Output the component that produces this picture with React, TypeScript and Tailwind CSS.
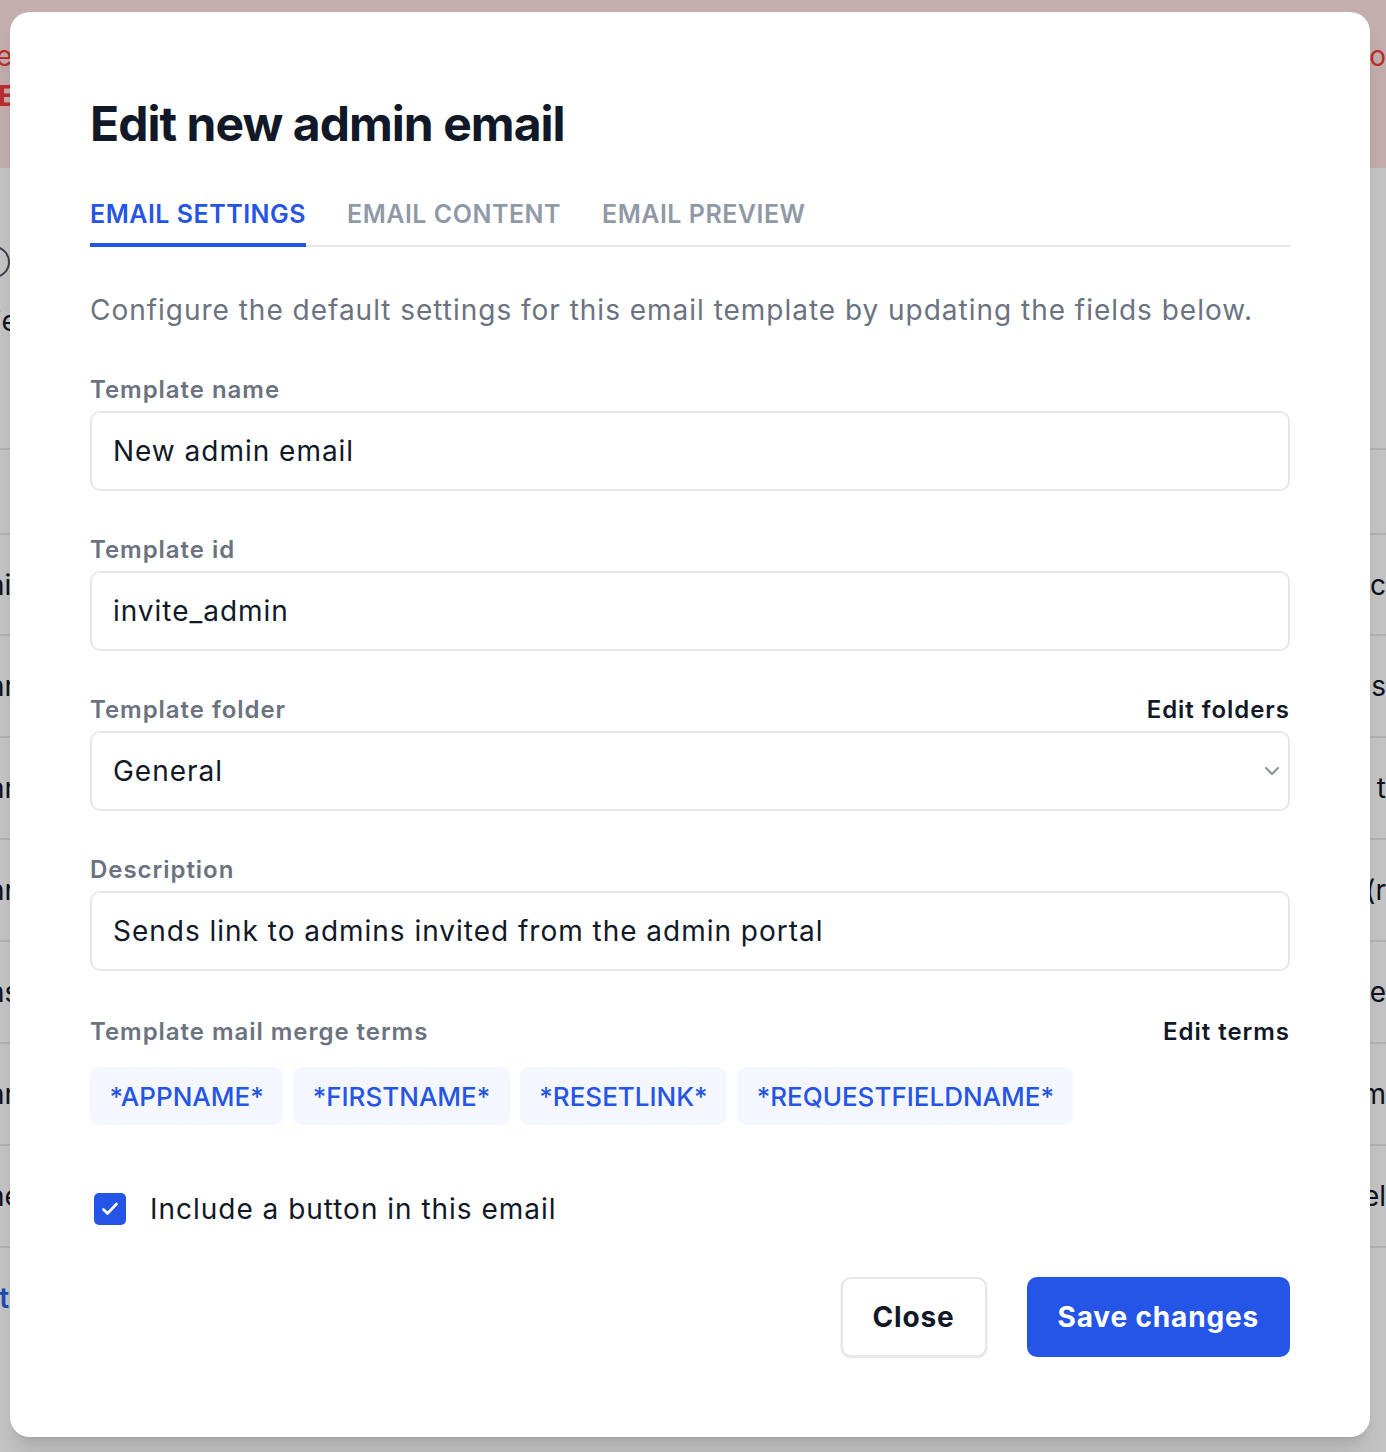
import React from "react";

function Field({ label, right, children }: { label: string; right?: string; children: React.ReactNode }) {
  return (
    <div className="flex flex-col">
      <div className="flex items-center justify-between">
        <span className="text-[24px] font-semibold leading-[32px] tracking-[0.04em] text-[#6b7280]">{label}</span>
        {right && (
          <span className="text-[24px] font-semibold leading-[32px] tracking-[0.04em] text-[#111827]">{right}</span>
        )}
      </div>
      <div className="mt-[5px]">{children}</div>
    </div>
  );
}

function TextBox({ value }: { value: string }) {
  return (
    <input
      readOnly
      defaultValue={value}
      className="h-[80px] w-full rounded-[10px] border-2 border-[#e5e7eb] bg-white px-[21px] text-[28px] tracking-[0.035em] text-[#111827] outline-none"
    />
  );
}

const chips = ["*APPNAME*", "*FIRSTNAME*", "*RESETLINK*", "*REQUESTFIELDNAME*"];

const rows: { h: string; left: string; right: string }[] = [
  { h: "h-[85px]", left: "", right: "" },
  { h: "h-[101px]", left: "ni", right: "c" },
  { h: "h-[102px]", left: "nm", right: "s" },
  { h: "h-[102px]", left: "nm", right: "ı t" },
  { h: "h-[102px]", left: "nr", right: "(r" },
  { h: "h-[102px]", left: "ns", right: "re" },
  { h: "h-[102px]", left: "nm", right: "m" },
  { h: "h-[102px]", left: "ne", right: "el" },
];

export default function App() {
  return (
    <div className="relative h-[1452px] w-[1386px] overflow-hidden bg-white font-['Inter','Noto_Sans',sans-serif]">
      {/* background page */}
      <div className="flex flex-col">
        <div className="flex h-[168px] flex-col bg-[#fee2e2] pt-[36px]">
          <div className="flex h-[40px] items-center text-[28px] text-[#f53b3b]">
            <span className="-ml-[4px] w-[1376px]">e</span>
            <span>o</span>
          </div>
          <div className="flex h-[40px] items-center text-[28px] font-bold text-[#f53b3b]">
            <span className="-ml-[2px]">E</span>
          </div>
        </div>
        <div className="flex h-[282px] flex-col border-b-2 border-[#e5e7eb]">
          <div className="mt-[78px] -ml-[22px] h-[32px] w-[32px] rounded-full border-2 border-[#4b5563]"></div>
          <div className="mt-[22px] -ml-[12px] text-[28px] text-[#111827]">lie</div>
        </div>
        {rows.map((r, i) => (
          <div key={i} className={`flex ${r.h} items-center border-b-2 border-[#e5e7eb] text-[28px] text-[#111827]`}>
            <div className="w-[1372px] overflow-hidden">
              <span className="-ml-[12px] block">{r.left}</span>
            </div>
            <span className="whitespace-nowrap">{r.right}</span>
          </div>
        ))}
        <div className="flex h-[100px] items-center text-[28px] font-semibold text-[#2563eb]">
          <span className="-ml-[8px]">ite</span>
        </div>
      </div>

      {/* overlay */}
      <div className="absolute inset-0 bg-black/[0.23]"></div>

      {/* modal */}
      <div className="absolute left-[10px] top-[12px] w-[1360px] rounded-[20px] bg-white px-[80px] pb-[80px] pt-[80px] shadow-xl">
        <h1 className="text-[48px] font-bold leading-[64px] tracking-[-0.02em] text-[#111827]">Edit new admin email</h1>

        <div className="mt-[42px] flex gap-[41px] border-b-2 border-[#e5e7eb]">
          <div className="-mb-[2px] border-b-4 border-[#2555e6] pb-[13px] text-[25px] font-semibold leading-[32px] tracking-[0.02em] text-[#2555e6]">
            EMAIL SETTINGS
          </div>
          <div className="pb-[13px] text-[25px] font-semibold leading-[32px] tracking-[0.02em] text-[#9199a6]">
            EMAIL CONTENT
          </div>
          <div className="pb-[13px] text-[25px] font-semibold leading-[32px] tracking-[0.02em] text-[#9199a6]">
            EMAIL PREVIEW
          </div>
        </div>

        <p className="mt-[43px] text-[28px] leading-[40px] tracking-[0.035em] text-[#6b7280]">
          Configure the default settings for this email template by updating the fields below.
        </p>

        <div className="mt-[44px] flex flex-col gap-[43px]">
          <Field label="Template name">
            <TextBox value="New admin email" />
          </Field>
          <Field label="Template id">
            <TextBox value="invite_admin" />
          </Field>
          <Field label="Template folder" right="Edit folders">
            <div className="flex h-[80px] w-full items-center justify-between rounded-[10px] border-2 border-[#e5e7eb] bg-white pl-[21px] pr-[8px] text-[28px] tracking-[0.035em] text-[#111827]">
              <span>General</span>
              <svg width="16" height="10" viewBox="0 0 16 10" fill="none">
                <path d="M2 2l6 6 6-6" stroke="#8b8f96" strokeWidth="2" strokeLinecap="round" strokeLinejoin="round" />
              </svg>
            </div>
          </Field>
          <Field label="Description">
            <TextBox value="Sends link to admins invited from the admin portal" />
          </Field>
          <div className="mt-[2px] flex flex-col">
            <div className="flex items-center justify-between">
              <span className="text-[24px] font-semibold leading-[32px] tracking-[0.04em] text-[#6b7280]">
                Template mail merge terms
              </span>
              <span className="text-[24px] font-semibold leading-[32px] tracking-[0.04em] text-[#111827]">Edit terms</span>
            </div>
            <div className="mt-[19px] flex gap-[10px]">
              {chips.map((c) => (
                <span
                  key={c}
                  className="flex h-[58px] items-center rounded-[9px] bg-[#f4f7ff] px-[19.5px] text-[26px] font-medium text-[#2555e6]"
                >
                  {c}
                </span>
              ))}
            </div>
          </div>
        </div>

        <div className="mt-[64px] flex h-[40px] items-center gap-[24px] pl-[4px]">
          <span className="flex h-[32px] w-[32px] items-center justify-center rounded-[5px] bg-[#2555e6]">
            <svg width="24" height="24" viewBox="0 0 24 24" fill="none">
              <path d="M5.5 12.5l4 4 9-9.5" stroke="white" strokeWidth="2.6" strokeLinecap="round" strokeLinejoin="round" />
            </svg>
          </span>
          <span className="text-[28px] tracking-[0.035em] text-[#111827]">Include a button in this email</span>
        </div>

        <div className="mt-[48px] flex justify-end gap-[40px]">
          <button className="h-[80px] rounded-[10px] border-2 border-[#e5e7eb] bg-white px-[30px] text-[28px] font-bold tracking-[0.03em] text-[#111827] shadow-sm">
            Close
          </button>
          <button className="h-[80px] rounded-[10px] bg-[#2555e6] px-[31px] text-[28px] font-bold tracking-[0.03em] text-white">
            Save changes
          </button>
        </div>
      </div>
    </div>
  );
}
